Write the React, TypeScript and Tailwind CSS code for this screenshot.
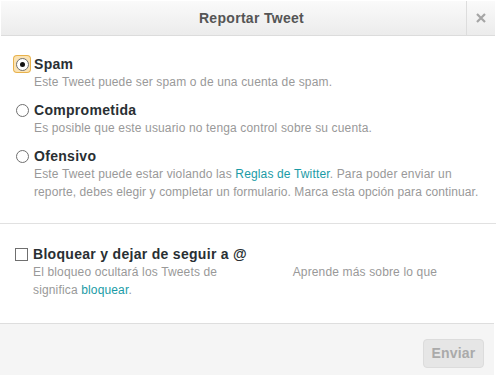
import React from 'react'

const Radio: React.FC<{ checked?: boolean }> = ({ checked }) => (
  <span
    className={`flex items-center justify-center w-[16px] h-[16px] rounded-[3px] shrink-0 ${
      checked ? 'bg-[#fbe3b4] ring-1 ring-[#e8b24c]' : ''
    }`}
  >
    <span className="flex items-center justify-center w-[13px] h-[13px] rounded-full border border-[#6f6f6f] bg-white">
      {checked && <span className="w-[5px] h-[5px] rounded-full bg-[#111]" />}
    </span>
  </span>
)

const Option: React.FC<{ label: string; checked?: boolean; children: React.ReactNode }> = ({
  label,
  checked,
  children,
}) => (
  <div className="flex flex-col">
    <div className="flex items-center gap-[4px] ml-[-1px]">
      <Radio checked={checked} />
      <span className="text-[14px] leading-[18px] font-bold tracking-[0.3px] text-[#292f33]">{label}</span>
    </div>
    <p className="pl-[19px] text-[12px] leading-[18px] tracking-[0.15px] text-[#999]">{children}</p>
  </div>
)

const App: React.FC = () => {
  return (
    <div
      className="w-[496px] h-[376px] bg-white flex flex-col overflow-hidden"
      style={{ fontFamily: '"Liberation Sans", Arial, sans-serif' }}
    >
      {/* Header */}
      <div className="flex h-[35px] shrink-0 mt-[1px] ml-[1px] mr-[1px] border-b border-[#dcdcdc] bg-gradient-to-b from-[#fafafa] to-[#ececec]">
        <div className="flex-1 flex items-center justify-center pl-[36px]">
          <h1 className="text-[14px] font-bold tracking-[0.3px] text-[#555]">Reportar Tweet</h1>
        </div>
        <button className="w-[29px] border-l border-[#dddddd] flex items-center justify-center">
          <svg width="10" height="10" viewBox="0 0 10 10">
            <path d="M1 1 L9 9 M9 1 L1 9" stroke="#a5a5a5" strokeWidth="2.2" />
          </svg>
        </button>
      </div>

      {/* Options */}
      <div className="flex flex-col gap-[10px] pl-[15px] pr-[4px] pt-[19px] pb-[22px] border-b border-[#e1e1e1]">
        <Option label="Spam" checked>
          Este Tweet puede ser spam o de una cuenta de spam.
        </Option>
        <Option label="Comprometida">Es posible que este usuario no tenga control sobre su cuenta.</Option>
        <Option label="Ofensivo">
          Este Tweet puede estar violando las <span className="text-[#1a9ba6]">Reglas de Twitter</span>. Para
          poder enviar un
          <br />
          <span className="whitespace-nowrap tracking-[0.1px]">
            reporte, debes elegir y completar un formulario. Marca esta opción para continuar.
          </span>
        </Option>
      </div>

      {/* Block */}
      <div className="flex-1 flex flex-col pl-[15px] pr-[10px] pt-[21px]">
        <div className="flex items-center gap-[5px]">
          <span className="w-[13px] h-[13px] border border-[#6f6f6f] bg-white shrink-0" />
          <span className="text-[14px] leading-[18px] font-bold tracking-[0.3px] text-[#292f33]">
            Bloquear y dejar de seguir a @
          </span>
        </div>
        <p className="pl-[18px] text-[12px] leading-[18px] tracking-[0.15px] text-[#999]">
          El bloqueo ocultará los Tweets de <span className="inline-block w-[72px]" />Aprende más sobre lo que
          <br />
          significa <span className="text-[#1a9ba6]">bloquear</span>.
        </p>
      </div>

      {/* Footer */}
      <div className="h-[52px] shrink-0 mb-[1px] mr-[2px] border-t border-[#dedede] bg-[#f5f5f5] flex items-start justify-end pt-[15px] pr-[10px]">
        <button className="h-[29px] w-[61px] rounded-[4px] border border-[#dcdcdc] bg-[#e6e6e6] text-[14px] font-bold tracking-[0.2px] text-[#aaa]">
          Enviar
        </button>
      </div>
    </div>
  )
}

export default App
